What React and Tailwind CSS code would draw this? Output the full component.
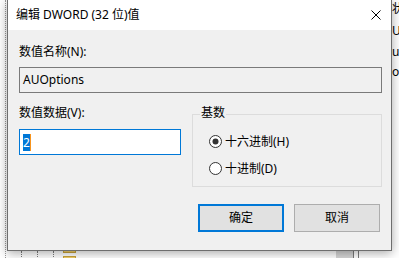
import React from "react";

const font = "font-['Noto_Sans','Noto_Sans_CJK_SC',sans-serif]";

function Radio({ checked, label }) {
  return (
    <div className="flex h-[13px] items-center gap-[3px]">
      <svg width="13" height="13" viewBox="0 0 13 13" className="shrink-0">
        <circle cx="6.5" cy="6.5" r="6" fill="#fff" stroke="#333" strokeWidth="1" />
        {checked && <circle cx="6.5" cy="6.5" r="3" fill="#333" />}
      </svg>
      <span className="whitespace-nowrap leading-[16px]">{label}</span>
    </div>
  );
}

export default function App() {
  return (
    <div className={`relative h-[258px] w-[399px] overflow-hidden bg-white text-[12px] text-black ${font}`}>
      {/* background: regedit behind */}
      <div className="absolute left-[5px] top-0 h-[258px] w-px border-l border-dotted border-[#9a9a9a]" />
      <div className="absolute left-[21px] top-[251px] h-[8px] w-px border-l border-dotted border-[#7a7a7a]" />
      <div className="absolute left-[37px] top-[251px] h-[8px] w-px border-l border-dotted border-[#7a7a7a]" />
      <div className="absolute left-[53px] top-[251px] h-[8px] w-px border-l border-dotted border-[#7a7a7a]" />
      <div className="absolute left-[63px] top-[246px] h-[7px] w-[13px] border border-[#c9a43a] bg-[#f3cf6a]" />
      <div className="absolute left-[63px] top-[256px] h-[6px] w-[13px] border border-[#c9a43a] bg-[#f3cf6a]" />
      <div className="absolute left-[336px] top-[251px] h-[8px] w-[17px] bg-[#d6d6d6]" />
      <div className="absolute left-[353px] top-[251px] h-[8px] w-px bg-[#7a7a7a]" />
      <div className="absolute left-[358px] top-[251px] h-[8px] w-px bg-[#7a7a7a]" />
      <span className="absolute left-[392px] top-[1px] leading-[16px] whitespace-nowrap">状态</span>
      <span className="absolute left-[392px] top-[23px] leading-[16px] whitespace-nowrap">U</span>
      <span className="absolute left-[392px] top-[44px] leading-[16px] whitespace-nowrap">ut</span>
      <span className="absolute left-[392px] top-[64px] leading-[16px] whitespace-nowrap">o</span>

      {/* dialog window */}
      <div className="absolute left-[7px] top-0 flex h-[251px] w-[385px] flex-col border-x border-b border-[#6e6e6e] bg-[#f0f0f0] shadow-[0_2px_10px_rgba(0,0,0,0.35)]">
        <div className="flex h-[30px] shrink-0 items-center justify-between bg-white pl-[8px] pr-[10px]">
          <span className="leading-[16px]">编辑 DWORD (32 位)值</span>
          <svg width="10" height="10" viewBox="0 0 10 10">
            <path d="M0.5 0.5 L9.5 9.5 M9.5 0.5 L0.5 9.5" stroke="#000" strokeWidth="1" />
          </svg>
        </div>

        <div className="flex flex-col pl-[11px] pr-[9px]">
          <div className="mt-[14px] h-[16px] leading-[16px]">数值名称(N):</div>
          <div className="mt-[7px] flex h-[26px] items-center border border-[#7a7a7a] bg-[#f0f0f0] pl-[3px]">
            <span className="leading-[16px]">AUOptions</span>
          </div>

          <div className="mt-[12px] flex gap-[11px]">
            <div className="flex w-[162px] flex-col">
              <div className="h-[16px] leading-[16px]">数值数据(V):</div>
              <div className="mt-[8px] flex h-[26px] items-center border border-[#0078d7] bg-white pl-[3px]">
                <span className="h-[17px] bg-[#0078d7] leading-[17px] text-white">2</span>
                <span className="h-[17px] w-px bg-[#f7941d]" />
              </div>
            </div>
            <div className="flex-1 pt-[9px]">
              <div className="relative h-[73px] border border-[#dcdcdc]">
                <span className="absolute left-[7px] -top-[10px] bg-[#f0f0f0] px-px leading-[16px]">基数</span>
                <div className="flex flex-col gap-[14px] pl-[16px] pt-[20px]">
                  <Radio checked label="十六进制(H)" />
                  <Radio label="十进制(D)" />
                </div>
              </div>
            </div>
          </div>

          <div className="mt-[17px] flex justify-end gap-[10px] pr-[2px]">
            <div className="flex h-[28px] w-[86px] items-center justify-center border-2 border-[#0078d7] bg-[#e1e1e1]">
              <span className="leading-[16px]">确定</span>
            </div>
            <div className="flex h-[28px] w-[86px] items-center justify-center border border-[#adadad] bg-[#e1e1e1]">
              <span className="leading-[16px]">取消</span>
            </div>
          </div>
        </div>
      </div>
    </div>
  );
}
